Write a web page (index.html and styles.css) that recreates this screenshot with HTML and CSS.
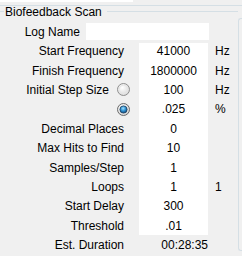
FILE: index.html
```html
<!DOCTYPE html>
<html>
<head>
<meta charset="utf-8">
<link rel="stylesheet" href="styles.css">
</head>
<body>
<div class="top"><div class="top-white"></div></div>
<div class="sep"></div>
<div class="main">
  <div class="group">
    <div class="legend">
      <span class="lline lline-left"></span>
      <span class="legend-text">Biofeedback Scan</span>
      <span class="lline lline-right"></span>
    </div>
    <div class="grid">
      <div class="logrow">
        <span class="loglabel">Log Name</span>
        <span class="loginput"></span>
      </div>
      <div class="valbg"></div>

      <div class="lbl r2">Start Frequency</div>
      <div class="val r2">41000</div>
      <div class="unit r2">Hz</div>

      <div class="lbl r3">Finish Frequency</div>
      <div class="val r3">1800000</div>
      <div class="unit r3">Hz</div>

      <div class="lbl lbl-radio r4">Initial Step Size<span class="radio"><svg width="13" height="13" viewBox="0 0 13 13"><defs><radialGradient id="g1" cx="0.4" cy="0.35" r="0.7"><stop offset="0" stop-color="#ffffff"/><stop offset="1" stop-color="#d6d6d6"/></radialGradient></defs><circle cx="6.5" cy="6.5" r="6" fill="url(#g1)" stroke="#8f8f8f" stroke-width="1"/><circle cx="6.5" cy="6.5" r="4.3" fill="none" stroke="#e6e6e6" stroke-width="1"/></svg></span></div>
      <div class="val r4">100</div>
      <div class="unit r4">Hz</div>

      <div class="lbl lbl-radio r5"><span class="radio"><svg width="13" height="13" viewBox="0 0 13 13"><defs><radialGradient id="g2" cx="0.4" cy="0.35" r="0.7"><stop offset="0" stop-color="#ffffff"/><stop offset="1" stop-color="#d0d0d0"/></radialGradient><radialGradient id="g3" cx="0.45" cy="0.35" r="0.7"><stop offset="0" stop-color="#9fe0ff"/><stop offset="0.5" stop-color="#2d8fd0"/><stop offset="1" stop-color="#0e3e6e"/></radialGradient></defs><circle cx="6.5" cy="6.5" r="6" fill="url(#g2)" stroke="#6b6b6b" stroke-width="1"/><circle cx="6.5" cy="6.5" r="3.6" fill="url(#g3)" stroke="#1c3f5f" stroke-width="0.8"/></svg></span></div>
      <div class="val r5">.025</div>
      <div class="unit r5">%</div>

      <div class="lbl r6">Decimal Places</div>
      <div class="val r6">0</div>

      <div class="lbl r7">Max Hits to Find</div>
      <div class="val r7">10</div>

      <div class="lbl r8">Samples/Step</div>
      <div class="val r8">1</div>

      <div class="lbl r9">Loops</div>
      <div class="val r9">1</div>
      <div class="unit r9">1</div>

      <div class="lbl r10">Start Delay</div>
      <div class="val r10">300</div>

      <div class="lbl r11">Threshold</div>
      <div class="val r11">.01</div>

      <div class="lbl r12">Est. Duration</div>
      <div class="val val-right r12">00:28:35</div>
    </div>
  </div>
  <div class="side"></div>
</div>
</body>
</html>
```

FILE: styles.css
```css
html, body {
  margin: 0;
  padding: 0;
}
body {
  width: 242px;
  height: 256px;
  overflow: hidden;
  background: #f0f0f0;
  font-family: "Liberation Sans", Arial, sans-serif;
  font-size: 12px;
  color: #000;
}
.top {
  height: 2px;
}
.top-white {
  width: 133px;
  height: 2px;
  background: #ffffff;
}
.sep {
  margin-top: 3px;
  height: 1px;
  background: #d5dfe5;
}
.main {
  display: flex;
  align-items: flex-start;
}
.group {
  width: 238px;
  flex: none;
}
.side {
  flex: none;
  width: 10px;
  margin-top: 12px;
  height: 231px;
  border: 1px solid #d5dfe5;
  border-right: none;
  border-radius: 3px 0 0 3px;
}
.legend {
  display: flex;
  align-items: flex-start;
  height: 13px;
  line-height: 13px;
}
.lline {
  height: 1px;
  background: #d5dfe5;
  margin-top: 5px;
}
.lline-left {
  width: 4px;
  margin-right: 1px;
}
.lline-right {
  flex: 1;
  margin-left: 5px;
}
.legend-text {
  white-space: nowrap;
}
.grid {
  margin-top: 3px;
  display: grid;
  grid-template-columns: 139px 69px 34px;
  grid-template-rows: 19.5px repeat(11, 19.4px);
  line-height: 14px;
}
.logrow {
  grid-column: 1 / 4;
  grid-row: 1;
  display: flex;
  align-items: center;
}
.loglabel {
  width: 80px;
  text-align: right;
}
.loginput {
  margin-left: 6px;
  width: 123px;
  height: 17px;
  background: #ffffff;
}
.valbg {
  grid-column: 2;
  grid-row: 2 / 12;
  background: #ffffff;
  margin: 1.5px 0 0.5px 0;
}
.lbl {
  grid-column: 1;
  display: flex;
  align-items: center;
  justify-content: flex-end;
  padding-right: 15px;
  white-space: nowrap;
}
.lbl-radio {
  padding-right: 9px;
}
.radio {
  display: flex;
  margin-left: 8px;
  width: 13px;
  height: 13px;
}
.val {
  grid-column: 2;
  display: flex;
  align-items: center;
  justify-content: center;
}
.val-right {
  justify-content: flex-end;
}
.unit {
  grid-column: 3;
  display: flex;
  align-items: center;
  padding-left: 7px;
}
.r2 { grid-row: 2; }
.r3 { grid-row: 3; }
.r4 { grid-row: 4; }
.r5 { grid-row: 5; }
.r6 { grid-row: 6; }
.r7 { grid-row: 7; }
.r8 { grid-row: 8; }
.r9 { grid-row: 9; }
.r10 { grid-row: 10; }
.r11 { grid-row: 11; }
.r12 { grid-row: 12; }
```
